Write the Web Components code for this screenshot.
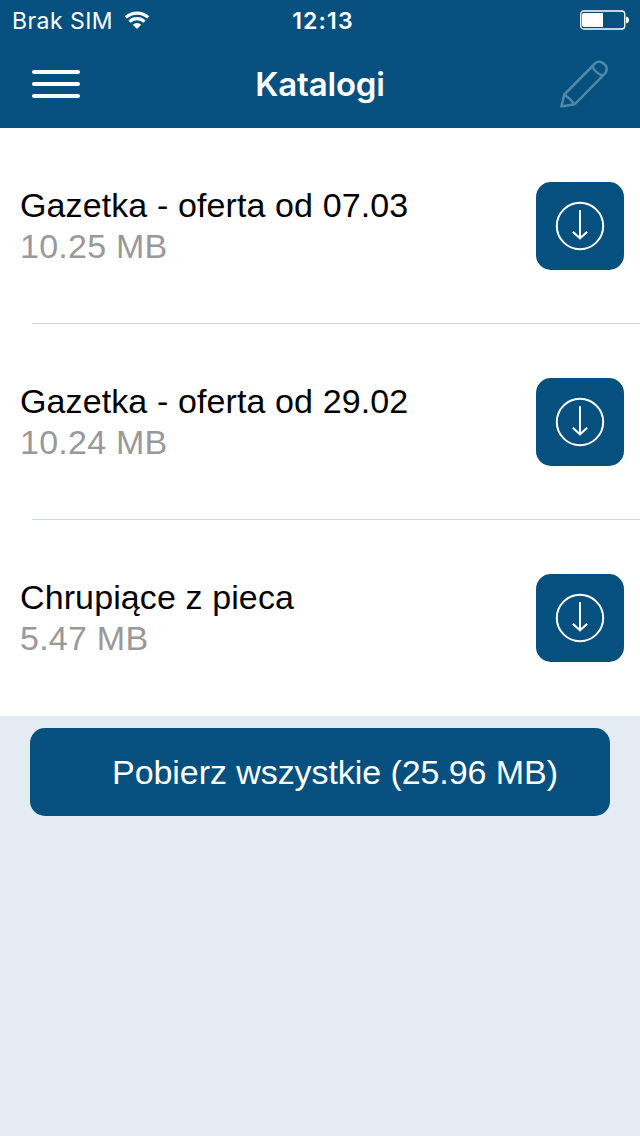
<!DOCTYPE html>
<html lang="pl">
<head>
<meta charset="utf-8">
<title>Katalogi</title>
<style>
body { margin: 0; background: #e4ebf3; font-family: "Liberation Sans", Arial, sans-serif; }
</style>
</head>
<body>
<catalog-app></catalog-app>
<script>
const define = (name, html) => customElements.define(name, class extends HTMLElement {
  constructor() {
    super();
    this.attachShadow({ mode: "open" }).innerHTML = html;
  }
});

define("status-bar", `
<style>
:host { display: grid; grid-template-columns: 1fr auto 1fr; align-items: center; height: 40px; box-sizing: border-box; padding: 0 11px 0 12px; color: #fff; font: 24px/40px Inter, sans-serif; }
.left { display: flex; align-items: center; gap: 11px; }
.carrier { letter-spacing: .45px; font-size: 23px; white-space: nowrap; padding-top: 2px; line-height: 38px; }
.time { font-weight: 600; font-size: 23px; letter-spacing: 1.2px; padding-top: 2px; line-height: 38px; margin-left: 5px; }
.battery { justify-self: end; }
svg { display: block; }
</style>
<div class="left"><span class="carrier">Brak SIM</span>
<svg width="26" height="20" viewBox="0 0 26 20" fill="none" stroke="#fff" stroke-width="3.2"><path d="M1.8 7.4a16.6 16.6 0 0 1 22.4 0"/><path d="M5.5 11.7a10.8 10.8 0 0 1 15 0"/><path d="M13 19l-4.2-4.3a6.2 6.2 0 0 1 8.4 0z" fill="#fff" stroke="none"/></svg></div>
<span class="time">12:13</span>
<svg class="battery" width="49" height="20" viewBox="0 0 49 20"><rect x=".75" y="1" width="44" height="18" rx="3" fill="none" stroke="#fff" stroke-width="1.3"/><path d="M4 3h19v14H4a2 2 0 0 1-2-2V5a2 2 0 0 1 2-2z" fill="#fff"/><path d="M46 6.5c4 .5 4 6.5 0 7z" fill="#fff"/></svg>`);

define("nav-bar", `
<style>
:host { display: grid; grid-template-columns: 1fr auto 1fr; align-items: center; height: 88px; box-sizing: border-box; padding: 0 32px; color: #fff; }
h1 { margin: 0; font: 600 33px/88px Inter, sans-serif; letter-spacing: -.2px; }
.edit { justify-self: end; }
svg { display: block; }
</style>
<svg width="48" height="28" viewBox="0 0 48 28" stroke="#fff" stroke-width="4" stroke-linecap="round"><path d="M2 2h44M2 14h44M2 26h44"/></svg>
<h1><slot></slot></h1>
<svg class="edit" width="48" height="48" viewBox="0 0 48 48" fill="none" stroke="#5088aa" stroke-width="2.5" stroke-linejoin="round"><path d="M1.4 46.6L4.3 34.5L33 5.5C35.5 2 39.2.6 42.4 2.7Q45.5 4.5 46.4 7C47.4 10.5 46 13 43.2 15.4L14.6 44.3L1.4 46.6Z"/><path d="M32.5 6Q34.5 12.5 42.7 15.7M4.3 34.5Q9.5 38 14.6 44.3"/></svg>`);

define("download-button", `
<style>
:host { display: flex; align-items: center; justify-content: center; width: 88px; height: 88px; flex: none; border-radius: 15px; background: #06507f; }
svg { display: block; }
</style>
<svg width="50" height="50" viewBox="0 0 50 50" fill="none" stroke="#fff" stroke-width="2"><circle cx="25" cy="25" r="23.2"/><path d="M25 9v28.5M17.8 30.8L25 37.3l7.2-6.5"/></svg>`);

define("catalog-row", `
<style>
:host { display: grid; grid-template-rows: 1fr 1px; height: 196px; background: #fff; }
.content { display: flex; align-items: center; justify-content: space-between; padding: 1px 16px 0 20px; }
.text { font-size: 34px; line-height: 41px; white-space: nowrap; }
.title { color: #000; letter-spacing: .11px; }
.size { color: #999; letter-spacing: .25px; }
.line { margin-left: 32px; background: #c8dbe0; }
:host([last]) .line { background: none; }
</style>
<div class="content"><div class="text"><div class="title"><slot></slot></div><div class="size"><slot name="size"></slot></div></div><download-button></download-button></div>
<div class="line"></div>`);

define("download-all", `
<style>
:host { display: flex; align-items: center; justify-content: center; height: 88px; margin: 12px 30px 0; box-sizing: border-box; padding-left: 30px; border-radius: 15px; background: #06507f; color: #fff; font-size: 34px; white-space: nowrap; letter-spacing: -.07px; }
</style>
<span><slot></slot></span>`);

define("catalog-app", `
<style>
:host { display: flex; flex-direction: column; height: 1136px; background: #e4ebf3; }
header { background: #06507f; }
</style>
<header><status-bar></status-bar><nav-bar>Katalogi</nav-bar></header>
<main>
<catalog-row>Gazetka - oferta od 07.03<span slot="size">10.25 MB</span></catalog-row>
<catalog-row>Gazetka - oferta od 29.02<span slot="size">10.24 MB</span></catalog-row>
<catalog-row last>Chrupiące z pieca<span slot="size">5.47 MB</span></catalog-row>
<download-all>Pobierz wszystkie (25.96 MB)</download-all>
</main>`);
</script>
</body>
</html>
